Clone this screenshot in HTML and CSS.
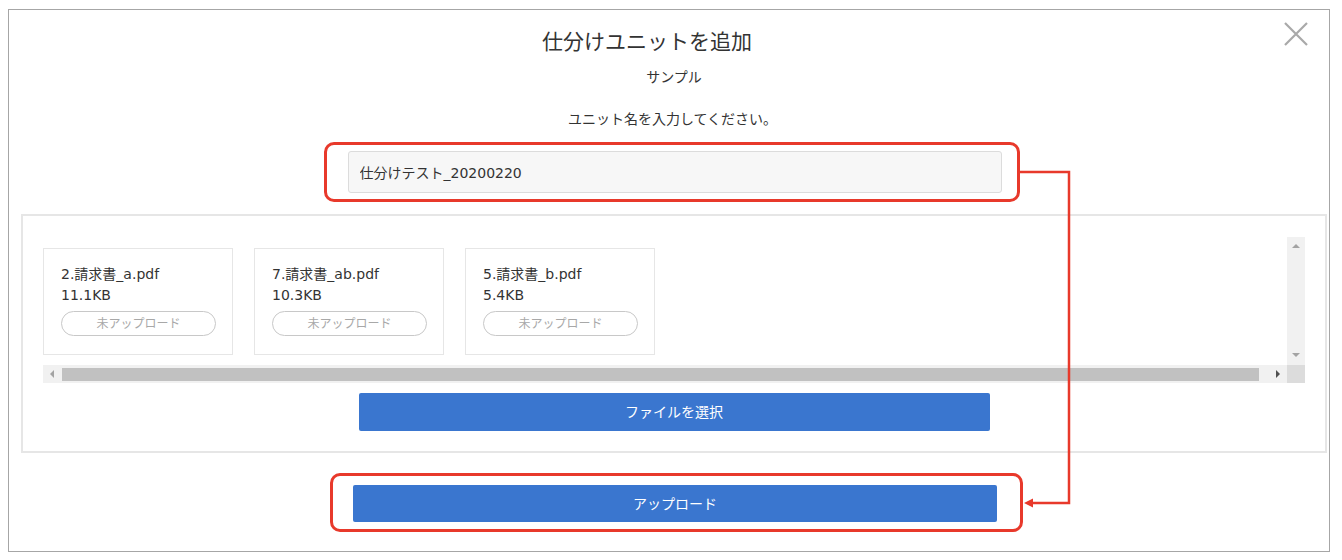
FILE: index.html
```html
<!DOCTYPE html>
<html lang="ja">
<head>
    <meta charset="UTF-8">
    <meta name="viewport" content="width=device-width, initial-scale=1.0">
    <title>仕分けユニットを追加</title>
    <link rel="stylesheet" href="styles.css">
</head>
<body>
    <div class="modal">
        <button class="close" aria-label="閉じる">
            <svg width="24" height="24" viewBox="0 0 24 24">
                <path d="M1 1 L23 23 M23 1 L1 23" stroke="#a9a9a9" stroke-width="2.2" fill="none"/>
            </svg>
        </button>

        <h2 class="title">仕分けユニットを追加</h2>
        <p class="sample">サンプル</p>
        <p class="prompt">ユニット名を入力してください。</p>
        <input class="unit-name" type="text" value="仕分けテスト_20200220">

        <section class="files">
            <div class="scroller">
                <div class="cards">
                    <div class="card">
                        <p class="card-name">2.請求書_a.pdf</p>
                        <p class="card-size">11.1KB</p>
                        <span class="status">未アップロード</span>
                    </div>
                    <div class="card">
                        <p class="card-name">7.請求書_ab.pdf</p>
                        <p class="card-size">10.3KB</p>
                        <span class="status">未アップロード</span>
                    </div>
                    <div class="card">
                        <p class="card-name">5.請求書_b.pdf</p>
                        <p class="card-size">5.4KB</p>
                        <span class="status">未アップロード</span>
                    </div>
                </div>
                <div class="vbar">
                    <span class="arrow arrow-up"></span>
                    <span class="arrow arrow-down"></span>
                </div>
                <div class="hbar">
                    <span class="arrow arrow-left"></span>
                    <span class="thumb"></span>
                    <span class="arrow arrow-right"></span>
                </div>
                <div class="corner"></div>
            </div>
            <button class="btn btn-select">ファイルを選択</button>
        </section>

        <button class="btn btn-upload">アップロード</button>

        <!-- 説明用の赤枠と矢印 -->
        <div class="callout callout-input"></div>
        <div class="callout callout-upload"></div>
        <svg class="connector" width="1320" height="541" viewBox="0 0 1320 541">
            <polyline points="1011,162 1060,162 1060,493 1022,493" fill="none" stroke="#e8392b" stroke-width="2.5"/>
            <polygon points="1015,493 1024,488.5 1024,497.5" fill="#e8392b"/>
        </svg>
    </div>
</body>
</html>
```

FILE: styles.css
```css
body {
    margin: 0;
    font-family: "Noto Sans CJK JP", sans-serif;
    color: #333;
    background-color: #fff;
}

p {
    margin: 0;
}

.modal {
    position: relative;
    width: 1320px;
    height: 541px;
    margin: 9px 0 0 8px;
    border: 1px solid #a6a6a6;
    display: flex;
    flex-direction: column;
    align-items: center;
}

.close {
    position: absolute;
    top: 12px;
    right: 21px;
    width: 24px;
    height: 24px;
    padding: 0;
    border: none;
    background: none;
    display: flex;
}

.title {
    align-self: stretch;
    margin: 15px 0 0;
    padding-right: 44px;
    font-size: 21px;
    font-weight: normal;
    line-height: 30px;
    text-align: center;
}

.sample {
    margin-top: 11px;
    padding-left: 10px;
    font-size: 14px;
    line-height: 20px;
}

.prompt {
    margin-top: 22px;
    padding-left: 7px;
    font-size: 14px;
    line-height: 20px;
}

.unit-name {
    box-sizing: border-box;
    width: 654px;
    height: 42px;
    margin: 23px 0 0 11px;
    padding: 0 11px;
    border: 1px solid #dcdcdc;
    border-radius: 3px;
    background-color: #f7f7f7;
    font-family: "DejaVu Sans", "Noto Sans CJK JP", sans-serif;
    font-size: 14px;
    color: #333;
}

.files {
    box-sizing: border-box;
    align-self: flex-start;
    width: 1306px;
    height: 239px;
    margin: 21px 0 0 12px;
    padding: 21px 20px 0;
    border: 2px solid #e6e6e6;
    display: flex;
    flex-direction: column;
    align-items: center;
}

.scroller {
    align-self: stretch;
    display: grid;
    grid-template-columns: 1fr 18px;
    grid-template-rows: 128px 18px;
}

.cards {
    display: flex;
    gap: 21px;
    padding-top: 11px;
}

.card {
    box-sizing: border-box;
    width: 190px;
    height: 107px;
    padding: 15px 0 0 17px;
    border: 1px solid #e6e6e6;
}

.card-name,
.card-size {
    font-family: "DejaVu Sans", "Noto Sans CJK JP", sans-serif;
    font-size: 14px;
    line-height: 21px;
}

.status {
    box-sizing: border-box;
    display: block;
    width: 155px;
    height: 25px;
    margin-top: 5px;
    border: 1px solid #c8c8c8;
    border-radius: 13px;
    font-size: 12px;
    line-height: 22px;
    text-align: center;
    color: #a8a8a8;
}

.vbar {
    background-color: #f1f1f1;
    display: flex;
    flex-direction: column;
    justify-content: space-between;
    align-items: center;
    padding: 7px 0 8px;
}

.hbar {
    background-color: #f1f1f1;
    display: flex;
    align-items: center;
    padding: 0 7px;
    gap: 8px;
}

.thumb {
    flex: 1;
    height: 13px;
    margin-right: 9px;
    background-color: #c1c1c1;
}

.corner {
    background-color: #dcdcdc;
}

.arrow {
    width: 0;
    height: 0;
    border-style: solid;
}

.arrow-up {
    border-width: 0 4px 4px;
    border-color: transparent transparent #a3a3a3;
}

.arrow-down {
    border-width: 4px 4px 0;
    border-color: #a3a3a3 transparent transparent;
}

.arrow-left {
    border-width: 4px 4px 4px 0;
    border-color: transparent #a3a3a3 transparent transparent;
}

.arrow-right {
    border-width: 4px 0 4px 4px;
    border-color: transparent transparent transparent #505050;
}

.btn {
    box-sizing: border-box;
    padding: 0 0 2px;
    border: none;
    border-radius: 2px;
    background-color: #3a76cf;
    color: #fff;
    font-family: inherit;
    font-size: 14px;
}

.btn-select {
    width: 631px;
    height: 38px;
    margin-top: 10px;
}

.btn-upload {
    width: 644px;
    height: 37px;
    margin-top: 32px;
    margin-left: 12px;
}

.callout {
    position: absolute;
    box-sizing: border-box;
    border: 3px solid #e8392b;
    border-radius: 10px;
}

.callout-input {
    left: 315px;
    top: 132px;
    width: 696px;
    height: 60px;
}

.callout-upload {
    left: 321px;
    top: 463px;
    width: 693px;
    height: 59px;
}

.connector {
    position: absolute;
    left: 0;
    top: 0;
    pointer-events: none;
}
```
